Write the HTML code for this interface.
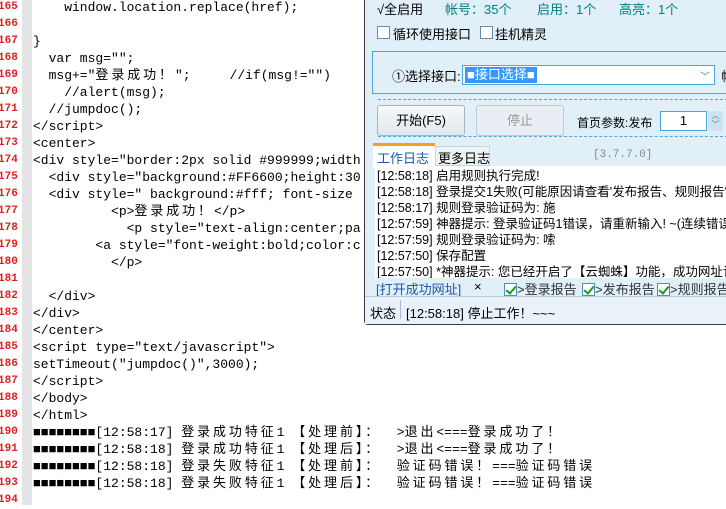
<!DOCTYPE html>
<html><head><meta charset="utf-8"><style>
*{margin:0;padding:0;box-sizing:border-box}
body{width:726px;height:505px;overflow:hidden;background:#fff;position:relative;font-family:"Liberation Sans","Noto Sans CJK SC",sans-serif}
.gut{position:absolute;left:0;top:0;width:22px;height:505px;background:#fff}
.gut2{position:absolute;left:22px;top:0;width:10px;height:505px;background:#e4e4e4}
.ln{position:absolute;left:-2px;width:24px;font:bold 11px "Liberation Mono",monospace;color:#e02020;line-height:17px}
.code{position:absolute;left:33px;font:13px "Liberation Mono","Noto Sans CJK SC",monospace;color:#000;line-height:17px;white-space:pre}
.c{letter-spacing:2.9px}
.a{position:absolute;white-space:nowrap}
#panel{position:absolute;left:364px;top:-2px;width:364px;height:327px;background:#e1eff9;border:1px solid #3a3a3a;border-top:none;border-right:none;border-radius:0 0 0 4px;font-size:13px;color:#000}
.t{color:#008080}
.cb{position:absolute;width:13px;height:13px;background:#fff;border:1px solid #6a8aa8}
.dash{position:absolute;left:13px;right:0;border-top:1.5px dashed #4aa8e0}
.btn{position:absolute;height:31px;border:1px solid #a8b4c0;border-radius:3px;background:linear-gradient(#f6f8fa,#e2e8ee);text-align:center;line-height:29px;font-size:13px}
.log{position:absolute;left:10px;top:168px;width:360px;height:112px;background:#fff;font-size:12.5px;line-height:16px;padding:2px 0 0 2px;overflow:hidden;white-space:nowrap}
.ck{display:inline-block;width:13px;height:13px;border:1px solid #4a90c0;background:#fff;vertical-align:-2px;position:relative}
.ck:after{content:"";position:absolute;left:3px;top:0px;width:4px;height:8px;border:solid #1a9a1a;border-width:0 2px 2px 0;transform:rotate(40deg)}
</style></head><body>
<div class="gut"></div><div class="gut2"></div>
<div class="ln" style="top:-1px">165<br>166<br>167<br>168<br>169<br>170<br>171<br>172<br>173<br>174<br>175<br>176<br>177<br>178<br>179<br>180<br>181<br>182<br>183<br>184<br>185<br>186<br>187<br>188<br>189<br>190<br>191<br>192<br>193<br>194</div>
<div class="code" style="top:-1px">    window.location.replace(href);

}
  var msg="";
  msg+="<span class="c">登录成功！</span>";     //if(msg!="")
    //alert(msg);
  //jumpdoc();
&lt;/script&gt;
&lt;center&gt;
&lt;div style="border:2px solid #999999;width
  &lt;div style="background:#FF6600;height:30
  &lt;div style=" background:#fff; font-size
          &lt;p&gt;<span class="c">登录成功！</span>&lt;/p&gt;
            &lt;p style="text-align:center;pa
        &lt;a style="font-weight:bold;color:c
          &lt;/p&gt;

  &lt;/div&gt;
&lt;/div&gt;
&lt;/center&gt;
&lt;script type="text/javascript"&gt;
setTimeout("jumpdoc()",3000);
&lt;/script&gt;
&lt;/body&gt;
&lt;/html&gt;
■■■■■■■■[12:58:17] <span class="c">登录成功特征</span>1 <span class="c">【处理前】：</span>  &gt;<span class="c">退出</span>&lt;===<span class="c">登录成功了！</span>
■■■■■■■■[12:58:18] <span class="c">登录成功特征</span>1 <span class="c">【处理后】：</span>  &gt;<span class="c">退出</span>&lt;===<span class="c">登录成功了！</span>
■■■■■■■■[12:58:18] <span class="c">登录失败特征</span>1 <span class="c">【处理前】：</span>  <span class="c">验证码错误！</span>===<span class="c">验证码错误</span>
■■■■■■■■[12:58:18] <span class="c">登录失败特征</span>1 <span class="c">【处理后】：</span>  <span class="c">验证码错误！</span>===<span class="c">验证码错误</span></div>

<div id="panel">
<div class="a" style="left:12px;top:1px">√全启用</div>
<div class="a t" style="left:80px;top:1px">帐号：35个</div>
<div class="a t" style="left:172px;top:1px">启用：1个</div>
<div class="a t" style="left:254px;top:1px">高亮：1个</div>
<div class="cb" style="left:12px;top:28px"></div><div class="a" style="left:28px;top:26px">循环使用接口</div>
<div class="cb" style="left:115px;top:28px"></div><div class="a" style="left:130px;top:26px">挂机精灵</div>
<div class="a" style="left:7px;top:53px;width:360px;height:43px;border:1px solid #4aa8e0"></div>
<div class="a" style="left:27px;top:68px">①选择接口:</div>
<div class="a" style="left:97px;top:67px;width:253px;height:20px;background:#fff;border:1px solid #4aa8e0"><span style="position:absolute;left:2px;top:1px;background:#3399ff;color:#fff;height:16px;line-height:16px;padding:0 2px">■接口选择■</span><span style="position:absolute;right:4px;top:2px;color:#3a7ab8;font-size:10px">﹀</span></div>
<div class="a" style="left:356px;top:68px">帧</div>
<div class="dash" style="top:101px"></div>
<div class="btn" style="left:12px;top:107px;width:88px">开始(F5)</div>
<div class="btn" style="left:111px;top:107px;width:88px;color:#999;background:#e8eef3;border-color:#c0c8d0">停止</div>
<div class="a" style="left:212px;top:116px;font-size:12px">首页参数:发布</div>
<div class="a" style="left:295px;top:113px;width:47px;height:20px;background:#fff;border:1px solid #4aa8e0;text-align:center;line-height:18px">1</div>
<div class="a" style="left:343px;top:113px;width:15px;height:20px;background:#cfe2f2;color:#3a7ab8;font-size:8px;line-height:9px;text-align:center">︿<br>﹀</div>
<div class="dash" style="top:138px"></div>
<div class="a" style="left:8px;top:145px;width:62px;height:24px;background:#fff;border-top:3px solid #f5a020;color:#1a5aa8;font-size:13px;padding:2px 0 0 4px">工作日志</div>
<div class="a" style="left:70px;top:148px;width:55px;height:20px;background:#eef3f6;border:1px solid #c8d4dc;font-size:13px;padding:1px 0 0 2px">更多日志</div>
<div class="a" style="left:228px;top:151px;color:#888;font:11px 'Liberation Mono',monospace">[3.7.7.0]</div>
<div class="log">[12:58:18] 启用规则执行完成!<br>[12:58:18] 登录提交1失败(可能原因请查看'发布报告、规则报告'<br>[12:58:17] 规则登录验证码为: 施<br>[12:57:59] 神器提示: 登录验证码1错误，请重新输入! ~(连续错误<br>[12:57:59] 规则登录验证码为: 嗦<br>[12:57:50] 保存配置<br>[12:57:50] *神器提示: 您已经开启了【云蜘蛛】功能，成功网址记</div>
<div class="a" style="left:11px;top:281px;color:#1a5aa8">[打开成功网址]</div>
<div class="a" style="left:109px;top:281px">×</div>
<div class="a" style="left:139px;top:281px;color:#333"><span class="ck"></span>&gt;登录报告</div>
<div class="a" style="left:217px;top:281px;color:#333"><span class="ck"></span>&gt;发布报告</div>
<div class="a" style="left:292px;top:281px;color:#333"><span class="ck"></span>&gt;规则报告</div>
<div class="a" style="left:0;top:298px;width:364px;height:28px;background:#e9f2f9;border-top:1px solid #b8cce0"></div>
<div class="a" style="left:5px;top:305px">状态</div>
<div class="a" style="left:35px;top:302px;width:1px;height:19px;background:#a8bcd0"></div>
<div class="a" style="left:41px;top:305px">[12:58:18] 停止工作！~~~</div>
</div>
</body></html>
